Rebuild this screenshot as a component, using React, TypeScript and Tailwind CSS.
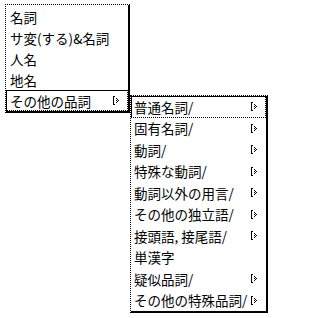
import React from 'react'

interface Item {
    label: string;
    sub?: boolean;
    selected?: boolean;
}

const mainItems: Item[] = [
    { label: '名詞' },
    { label: 'サ変(する)&名詞' },
    { label: '人名' },
    { label: '地名' },
    { label: 'その他の品詞', sub: true, selected: true },
]

const subItems: Item[] = [
    { label: '普通名詞/', sub: true, selected: true },
    { label: '固有名詞/', sub: true },
    { label: '動詞/', sub: true },
    { label: '特殊な動詞/', sub: true },
    { label: '動詞以外の用言/', sub: true },
    { label: 'その他の独立語/', sub: true },
    { label: '接頭語, 接尾語/', sub: true },
    { label: '単漢字' },
    { label: '疑似品詞/', sub: true },
    { label: 'その他の特殊品詞/', sub: true },
]

// little "[>" cascade mark
const Cascade = () => (
    <svg width="8" height="9" viewBox="0 0 8 9" shapeRendering="crispEdges" className="shrink-0">
        <rect x="0" y="0" width="1" height="9" fill="#000" />
        <rect x="0" y="0" width="2" height="1" fill="#000" />
        <rect x="0" y="8" width="2" height="1" fill="#000" />
        <rect x="3" y="2" width="1" height="1" fill="#000" />
        <rect x="4" y="3" width="1" height="1" fill="#000" />
        <rect x="5" y="4" width="1" height="1" fill="#000" />
        <rect x="4" y="5" width="1" height="1" fill="#000" />
        <rect x="3" y="6" width="1" height="1" fill="#000" />
        <rect x="3" y="4" width="1" height="1" fill="#000" />
    </svg>
)

const Row = ({ item, tall, pad }: { item: Item; tall: boolean; pad: string }) => (
    <div
        className={
            (tall ? 'h-[21.5px] ' : 'h-[21px] ') +
            pad +
            ' flex items-center justify-between pr-[6px] border ' +
            (item.selected
                ? 'border-black [border-style:solid_dotted_dotted_solid]!'
                : 'border-transparent')
        }
    >
        <span className="leading-[16px] whitespace-nowrap">{item.label}</span>
        {item.sub && <Cascade />}
    </div>
)

const App = () => {
    return (
        <div
            className="w-[272px] h-[318px] bg-white text-black text-[13.5px] flex items-start pl-[5px] pt-[4px]"
            style={{ fontFamily: '"Noto Sans CJK JP", "Noto Sans", sans-serif' }}
        >
            <div className="w-[125px] pt-px bg-white border-t border-l border-r-2 border-b-2 border-black [border-style:dotted_solid_solid_dotted]!">
                {mainItems.map((it) => (
                    <Row key={it.label} item={it} tall={false} pad="pl-[3px]" />
                ))}
            </div>
            <div className="w-[138px] mt-[91px] bg-white border-t border-l border-r-2 border-b-2 border-black [border-style:dotted_solid_solid_dotted]!">
                {subItems.map((it) => (
                    <Row key={it.label} item={it} tall={true} pad="pl-[2px]" />
                ))}
            </div>
        </div>
    )
}

export default App
